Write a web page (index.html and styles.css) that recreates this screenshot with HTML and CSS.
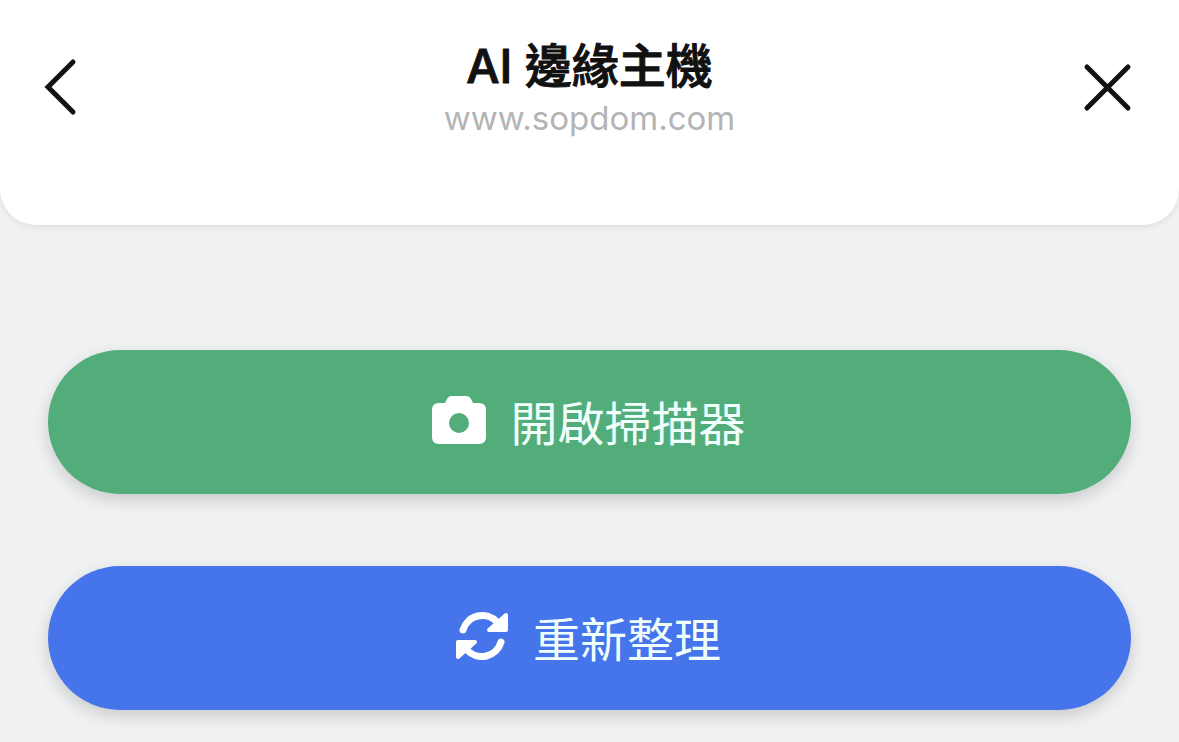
FILE: index.html
```html
<!DOCTYPE html>
<html lang="zh-Hant">
<head>
<meta charset="utf-8">
<meta name="viewport" content="width=device-width, initial-scale=1">
<title>AI 邊緣主機</title>
<link rel="stylesheet" href="styles.css">
</head>
<body>
<header class="header">
  <button class="nav-button" type="button" aria-label="返回">
    <svg width="48" height="60" viewBox="0 0 48 60" aria-hidden="true"><path d="M29 6 4 31l25 25"/></svg>
  </button>
  <div class="heading">
    <h1 class="title">AI 邊緣主機</h1>
    <p class="address">www.sopdom.com</p>
  </div>
  <button class="nav-button" type="button" aria-label="關閉">
    <svg width="48" height="60" viewBox="0 0 48 60" aria-hidden="true"><path d="M0 11l41 41M41 11 0 52"/></svg>
  </button>
</header>
<main class="actions">
  <button class="action action-scan" type="button">
    <svg width="56" height="50" viewBox="0 0 56 50" aria-hidden="true"><path fill="#fff" fill-rule="evenodd" d="M8 8h6l2-4q1.500-3 5-3h14q3.500 0 5 3l2 4h6q7 0 7 7v27q0 7-7 7H8q-7 0-7-7V15q0-7 7-7ZM28 18a10 10 0 1 0 0 20 10 10 0 0 0 0-20Z"/></svg>
    <span class="action-label">開啟掃描器</span>
  </button>
  <button class="action action-refresh" type="button">
    <svg width="54" height="50" viewBox="0 0 54 50" aria-hidden="true">
      <g fill="none" stroke="#fff" stroke-width="7" stroke-linecap="round"><path d="M8 19a20 20 0 0 1 34-8l4 4"/><path d="M46 31a20 20 0 0 1-34 8l-4-4"/></g>
      <g fill="#fff" stroke="#fff" stroke-width="4" stroke-linejoin="round"><path d="M51 4v15H34Z"/><path d="M3 46V31h17Z"/></g>
    </svg>
    <span class="action-label">重新整理</span>
  </button>
</main>
</body>
</html>
```
FILE: styles.css
```css
* {
  box-sizing: border-box;
}

body {
  margin: 0;
  min-height: 100vh;
  background: #f0f1f3;
  font-family: Inter, "Noto Sans CJK TC", sans-serif;
}

.header {
  display: flex;
  justify-content: space-between;
  align-items: flex-start;
  padding: 36px 44px 84px;
  background: #fff;
  border-radius: 0 0 36px 36px;
  box-shadow: 0 2px 6px rgba(0, 0, 0, 0.08);
}

.nav-button {
  display: flex;
  margin: 20px 0 0;
  padding: 0;
  border: 0;
  background: none;
  cursor: pointer;
}

.nav-button svg {
  fill: none;
  stroke: #111;
  stroke-width: 5;
  stroke-linecap: round;
  overflow: visible;
}

.heading {
  text-align: center;
}

.title {
  margin: 0;
  color: #111;
  font-size: 47px;
  font-weight: 500;
  line-height: 60px;
  -webkit-text-stroke: 1px #111;
}

.address {
  margin: 0;
  color: #b4b4b4;
  font-size: 33px;
  line-height: 45px;
}

.actions {
  display: grid;
  gap: 72px;
  padding: 125px 48px 32px;
}

.action {
  display: flex;
  justify-content: center;
  align-items: center;
  gap: 24px;
  min-height: 144px;
  padding: 0 35px 4px 32px;
  border: 0;
  border-radius: 72px;
  color: #f0fffb;
  font-family: inherit;
  font-size: 47px;
  line-height: 68px;
  box-shadow: 0 6px 16px rgba(0, 0, 0, 0.16);
  cursor: pointer;
}

.action-label {
  padding-top: 8px;
}

.action-scan {
  background: #52ad7b;
}

.action-refresh {
  background: #4674eb;
}
```
